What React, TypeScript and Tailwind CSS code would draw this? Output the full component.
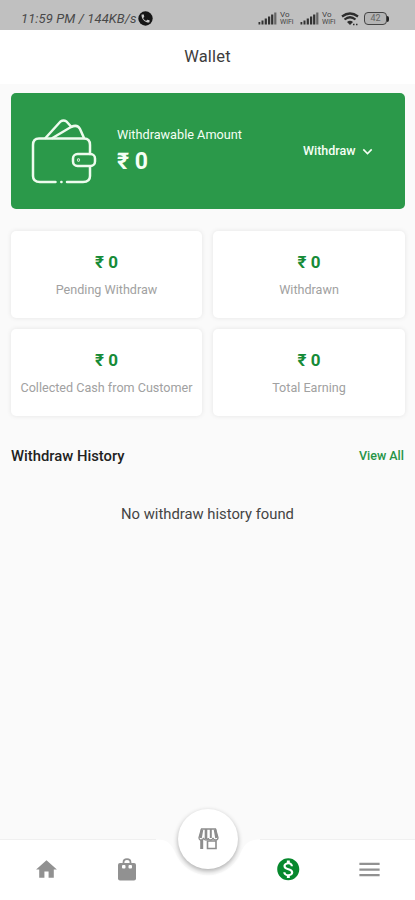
import React from 'react';
import { MdHome, MdMenu, MdMonetizationOn, MdKeyboardArrowDown } from 'react-icons/md';

const stats = [
  { label: 'Pending Withdraw', value: '₹ 0' },
  { label: 'Withdrawn', value: '₹ 0' },
  { label: 'Collected Cash from Customer', value: '₹ 0' },
  { label: 'Total Earning', value: '₹ 0' },
];

const SignalIcon: React.FC = () => (
  <svg width="19" height="13" viewBox="0 0 19 13" fill="#333" className="shrink-0">
    <rect x="0.5" y="10" width="1.8" height="2.5" />
    <rect x="3.5" y="8.5" width="2" height="4" />
    <rect x="6.7" y="6.5" width="2.2" height="6" />
    <rect x="10" y="4.5" width="2.2" height="8" />
    <rect x="13.1" y="2.5" width="2.2" height="10" />
    <rect x="16.2" y="0.5" width="2.2" height="12" fill="#666" />
  </svg>
);

const VoWifi: React.FC = () => (
  <div className="flex w-[17px] shrink-0 flex-col text-[#444]">
    <span className="h-[8px] text-[8px] leading-[8px]">Vo</span>
    <span className="h-[7px] text-[7px] leading-[7px]">WiFi</span>
  </div>
);

const StatusBar: React.FC = () => (
  <header className="flex h-[30px] shrink-0 items-center bg-[#c0c0c0] pt-[7px] pl-[21px]">
    <span className="w-[117px] text-[13px] leading-4 tracking-[0.1px] whitespace-nowrap text-[#484848] italic">
      11:59 PM / 144KB/s
    </span>
    <svg width="15" height="15" viewBox="0 0 24 24">
      <circle cx="12" cy="12" r="11.5" fill="#161616" />
      <path
        transform="translate(3.5 3.5) scale(0.71)"
        fill="#c8c8c8"
        d="M6.6 10.8c1.4 2.8 3.8 5.1 6.6 6.6l2.2-2.2c.3-.3.7-.4 1-.2 1.1.4 2.3.6 3.6.6.6 0 1 .4 1 1V20c0 .6-.4 1-1 1C10.6 21 3 13.4 3 4c0-.6.4-1 1-1h3.5c.6 0 1 .4 1 1 0 1.3.2 2.5.6 3.6.1.3 0 .7-.2 1z"
      />
    </svg>
    <div className="ml-[105px] flex items-center">
      <SignalIcon />
      <div className="ml-[3px]"><VoWifi /></div>
      <div className="ml-[3px]"><SignalIcon /></div>
      <div className="ml-[3px]"><VoWifi /></div>
      <svg width="18" height="14" viewBox="0 0 18 14" fill="none" stroke="#2d2d2d" className="ml-[2px]">
        <path d="M1 4.5Q9 -1.5 17 4.5" strokeWidth="2.2" />
        <path d="M3.5 7.5Q9 3 14.5 7.5" strokeWidth="2.2" />
        <path d="M6 10Q9 7.5 12 10L9 13Z" fill="#2d2d2d" stroke="none" />
        <path d="M12 12.5h1.5M15 12.5h1.5" strokeWidth="1.5" />
      </svg>
      <div className="ml-[5px] flex h-[13px] w-[23px] items-center justify-center rounded-[4px] border-[1.5px] border-[#444] bg-[#b4b4b4] text-[9px] leading-none text-[#666]">
        42
      </div>
      <div className="h-[6px] w-[2px] rounded-r bg-[#222]" />
    </div>
  </header>
);

const WalletIcon: React.FC = () => (
  <svg
    width="66"
    height="66"
    viewBox="0 0 66 66"
    fill="none"
    stroke="#eefbee"
    strokeWidth="2.5"
    strokeLinecap="round"
    strokeLinejoin="round"
    className="mt-[2px]"
  >
    <path d="M24.5 63H9Q2 63 2 57V26Q2 19.5 8 19.5H53Q59 19.5 59 26V35" />
    <path d="M59 48V57Q59 63 52 63H36" />
    <path d="M14.5 19L29.5 2.5Q32.5 0.5 35.5 2.5L40 7.5" />
    <path d="M21.5 19L40 8Q46.5 5 49 10L53 19" />
    <rect x="42" y="35" width="22" height="12" rx="4.5" />
    <circle cx="47.5" cy="41" r="0.4" />
    <path d="M30.3 63h.2" />
  </svg>
);

const BagIcon: React.FC = () => (
  <svg width="18" height="23" viewBox="0 0 18 23" fill="none" className="ml-[35px]">
    <path d="M5.5 7V4.5Q5.5 1.2 9 1.2Q12.5 1.2 12.5 4.5V7" stroke="#919191" strokeWidth="1.8" />
    <rect y="5" width="18" height="17.5" rx="2" fill="#919191" />
    <rect x="4" y="7" width="3.5" height="3.5" rx="1" fill="#fff" />
    <rect x="10.5" y="7" width="3.5" height="3.5" rx="1" fill="#fff" />
    <path d="M7.3 5V4Q7.3 3 9 3Q10.7 3 10.7 4V5Z" fill="#fff" />
  </svg>
);

const StoreIcon: React.FC = () => (
  <svg width="21" height="22" viewBox="0 0 21 22" fill="none" stroke="#8d8d8d">
    <path
      d="M3.5 1H17.5L20 9.5Q20 12 17.8 12Q15.5 12 15 10Q14.5 12 12.5 12Q10.5 12 10.2 10Q10 12 8 12Q6 12 5.5 10Q5 12 3 12Q1 12 1 9.5Z"
      strokeWidth="1.3"
    />
    <path d="M4 1.5L2.5 10M8 1V11M17 1.5L18.5 10" strokeWidth="2.6" />
    <path d="M12.8 1V10" strokeWidth="2" />
    <path d="M3.7 12V21" strokeWidth="3" />
    <path d="M9.5 13H18V20.5H9.5Z" strokeWidth="1.6" />
  </svg>
);

const BottomNav: React.FC = () => (
  <nav className="relative h-[61px] shrink-0">
    <svg className="absolute top-0 left-0" width="415" height="61" viewBox="0 0 415 61">
      <path
        d="M0 .5H156C168 .5 171 5 175 13C188 44 228 44 241 13C245 5 248 .5 260 .5H415V61H0Z"
        fill="#fff"
      />
      <path d="M0 .5H156M260 .5H415" stroke="#f0f0f0" />
    </svg>
    <div className="relative grid h-full grid-cols-5 items-center text-[#919191]">
      <MdHome className="ml-[34px] size-[25px]" />
      <BagIcon />
      <span />
      <MdMonetizationOn className="ml-[26px] size-[26.5px] text-[#07882d]" />
      <MdMenu className="ml-[24px] size-[27px]" />
    </div>
    <button className="absolute -top-[30px] left-[178px] flex size-[60px] items-center justify-center rounded-full bg-white shadow-[0_2px_5px_rgba(0,0,0,0.32)]">
      <StoreIcon />
    </button>
  </nav>
);

export default function App() {
  return (
    <div className="flex h-[900px] w-[415px] flex-col overflow-hidden bg-[#fafafa] font-[Roboto,sans-serif]">
      <StatusBar />
      <div className="flex h-[54px] shrink-0 items-center justify-center bg-white text-[16.5px] text-[#3d3d3d]">
        <h1 className="tracking-[0.2px]">Wallet</h1>
      </div>

      <main className="flex-1 pt-[9px] pr-[10px] pl-[11px]">
        <section className="flex h-[116px] items-center rounded-[5px] bg-[#2b994a] pl-[20px] text-[#f5fff5]">
          <WalletIcon />
          <div className="ml-[20px] w-[186px]">
            <p className="mt-[-2px] text-[12.7px] leading-[18px]">Withdrawable Amount</p>
            <p className="mt-[4px] text-[23px] leading-[27px] font-bold">₹ 0</p>
          </div>
          <button className="flex items-center text-[12.5px] font-medium">
            Withdraw
            <MdKeyboardArrowDown className="ml-[2px] size-[19px]" />
          </button>
        </section>

        <section className="mt-[22px] grid grid-cols-[191px_192px] gap-x-[11px] gap-y-[11px]">
          {stats.map((stat) => (
            <div
              key={stat.label}
              className="flex h-[87px] flex-col items-center rounded-[5px] bg-white pt-[20px] shadow-[0_0_5px_rgba(0,0,0,0.09)]"
            >
              <p className="text-[17px] leading-[22px] font-bold text-[#168b37]">{stat.value}</p>
              <p className="mt-[8px] text-[12.6px] leading-[18px] whitespace-nowrap text-[#a1a1a1]">
                {stat.label}
              </p>
            </div>
          ))}
        </section>

        <div className="mt-[30px] flex items-center justify-between pr-px">
          <h2 className="text-[14.8px] leading-5 font-medium text-[#222]">Withdraw History</h2>
          <a className="text-[12.5px] font-medium text-[#279447]">View All</a>
        </div>
        <p className="mt-[38px] pr-px text-center text-[14.8px] leading-5 text-[#444]">
          No withdraw history found
        </p>
      </main>

      <BottomNav />
    </div>
  );
}
